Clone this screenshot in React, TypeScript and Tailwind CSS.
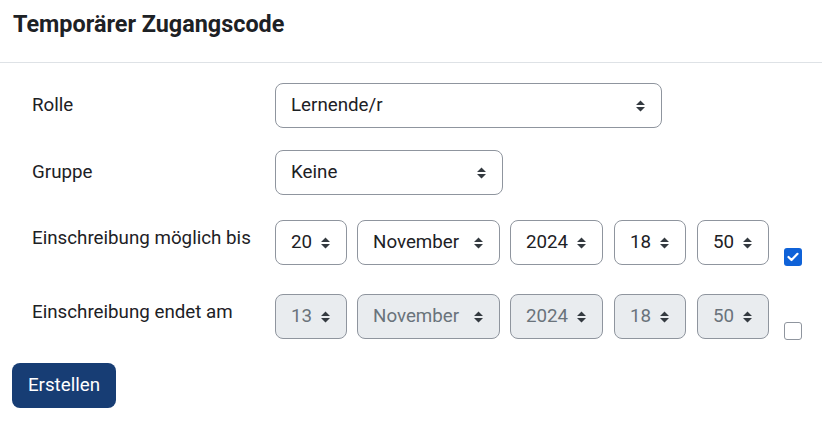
import React from "react";

function Arrows() {
  return (
    <svg width="9" height="12" viewBox="0 0 10 12" className="shrink-0">
      <path d="M0 5 L5 0 L10 5 Z M0 7 L10 7 L5 12 Z" fill="#343a40" />
    </svg>
  );
}

function Select({
  value,
  width,
  disabled,
  className = "",
}: {
  value: string;
  width: string;
  disabled?: boolean;
  className?: string;
}) {
  return (
    <div
      className={`flex h-[45px] shrink-0 items-center rounded-[8px] border border-[#8f959e] pl-[15px] pr-[16px] ${width} ${
        disabled ? "bg-[#e9ecef] text-[#6a737b]" : "bg-white text-[#1d2125]"
      } ${className}`}
    >
      <span className="leading-none">{value}</span>
      <span className="ml-auto">
        <Arrows />
      </span>
    </div>
  );
}

function Check({ checked }: { checked: boolean }) {
  if (checked) {
    return (
      <div className="mb-[-1px] ml-[15px] flex h-[18px] w-[18px] items-center justify-center rounded-[3px] bg-[#0f62d8]">
        <svg width="12" height="10" viewBox="0 0 12 10">
          <path d="M1.5 5 L4.5 8 L10.5 1.8" stroke="white" strokeWidth="2.2" fill="none" strokeLinecap="round" strokeLinejoin="round" />
        </svg>
      </div>
    );
  }
  return <div className="mb-[-1px] ml-[15px] h-[18px] w-[18px] rounded-[3px] border-[1.5px] border-[#8f959e] bg-white" />;
}

function DateRow({ day, disabled, checked }: { day: string; disabled?: boolean; checked: boolean }) {
  return (
    <div className="flex items-end">
      <Select value={day} width="w-[72px]" disabled={disabled} />
      <Select value="November" width="w-[143px]" disabled={disabled} className="ml-[10px]" />
      <Select value="2024" width="w-[93px]" disabled={disabled} className="ml-[10px]" />
      <Select value="18" width="w-[72px]" disabled={disabled} className="ml-[11px]" />
      <Select value="50" width="w-[72px]" disabled={disabled} className="ml-[11px]" />
      <Check checked={checked} />
    </div>
  );
}

export default function App() {
  return (
    <div
      className="h-[421px] w-[822px] bg-white text-[18.75px] text-[#1d2125]"
      style={{ fontFamily: "Roboto, 'Liberation Sans', sans-serif" }}
    >
      <div className="h-[63px] border-b border-[#dee2e6] pl-[13px] pt-[11px]">
        <h5 className="text-[23.4px] font-bold leading-[27px]">Temporärer Zugangscode</h5>
      </div>

      <div className="pl-[12px] pt-[20px]">
        <div className="flex pl-[20px]">
          <div className="w-[243px] pt-[8px] leading-[28px]">Rolle</div>
          <Select value="Lernende/r" width="w-[387px]" />
        </div>

        <div className="mt-[22px] flex pl-[20px]">
          <div className="w-[243px] pt-[8px] leading-[28px]">Gruppe</div>
          <Select value="Keine" width="w-[228px]" />
        </div>

        <div className="mt-[25px] flex pl-[20px]">
          <div className="w-[243px] pt-[4px] leading-[28px]">Einschreibung möglich bis</div>
          <DateRow day="20" checked />
        </div>

        <div className="mt-[29px] flex pl-[20px]">
          <div className="w-[243px] pt-[4px] leading-[28px]">Einschreibung endet am</div>
          <DateRow day="13" disabled checked={false} />
        </div>

        <button className="mt-[24px] flex h-[45px] w-[104px] items-center justify-center rounded-[8px] bg-[#173d74] text-[18.75px] text-white">
          Erstellen
        </button>
      </div>
    </div>
  );
}
